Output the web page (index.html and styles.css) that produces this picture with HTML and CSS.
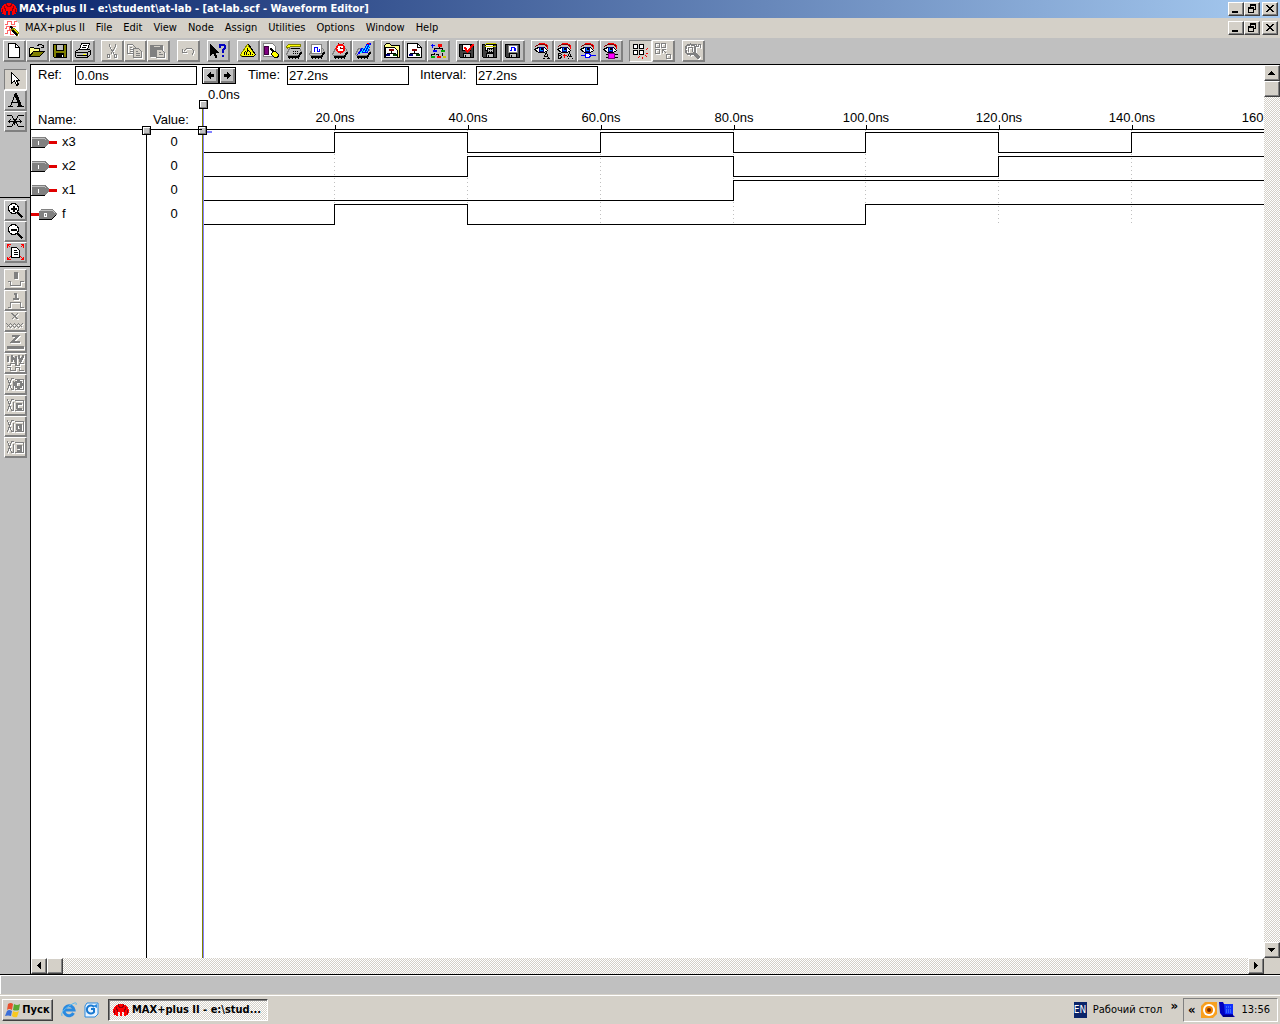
FILE: index.html
```html
<!DOCTYPE html>
<html lang="en">
<head>
<meta charset="utf-8">
<title>MAX+plus II - Waveform Editor</title>
<link rel="stylesheet" href="styles.css">
</head>
<body>
<svg class="sprite" aria-hidden="true">
  <symbol id="logo" viewBox="0 0 16 14">
    <path d="M5 1h6v1h2v1h1v1h1v2h1v4h-1v2h-2v1h-2V9H9v4H7V9H5v4H3v-1H1v-2H0V6h1V4h1V3h1V2h2z" fill="#f00"/>
    <path d="M5 1h1v2h1v1h2V3h1V1h1v3h-1v1H6V4H5zM3 4h1v2h1v3H4V7H3zM12 4h1v3h-1v2h-1V6h1zM1 7h1v4H1zM14 7h1v4h-1z" fill="#900010"/>
  </symbol>
  <symbol id="floppy" viewBox="-.5 -.5 16 16">
    <path d="M0 1H14V14H1L0 13Z" fill="#404040" stroke="#000"/>
    <path d="M3 1H11V7H3Z" fill="#fff" stroke="#000"/>
    <path d="M4 10H11V14H4Z" fill="#c0c0c0" stroke="#000"/><path d="M6 11V14" stroke="#000"/>
  </symbol>
  <symbol id="chip" viewBox="-.5 -.5 16 16">
    <path d="M0 11L3 5H13L15 8L12 12H1Z" fill="#c0c0c0" stroke="#808080"/>
    <path d="M1 13H12L15 9" fill="none" stroke="#000" stroke-width="2"/><path d="M3 13V15M6 13V15M9 13V15M12 13V15" stroke="#000"/>
  </symbol>
  <symbol id="eye" viewBox="-.5 -.5 16 16">
    <path d="M1 3L4 1H10L14 4" fill="none" stroke="#800000"/><path d="M4 0H10L13 2V5" fill="none" stroke="#f00"/>
    <path d="M0 6L4 4H10L13 7L10 9H4Z" fill="#fff" stroke="#000"/>
    <path d="M5 4H9V8H5Z" fill="#08f" stroke="#000080"/><path d="M7 5H8V6H7Z" fill="#000" stroke="#000"/>
  </symbol>
  <symbol id="tree" viewBox="-.5 -.5 16 16">
    <path d="M7 7V10M3 12V10H11V12" fill="none" stroke="#000"/>
    <path d="M5 6H9V7H5Z" fill="#f00" stroke="#800000"/><path d="M2 11H5V12H2Z" fill="#00f" stroke="#000080"/><path d="M9 11H12V12H9Z" fill="#0a0" stroke="#004000"/>
  </symbol>
  <symbol id="mux" viewBox="-.5 -.5 18 16">
    <path d="M0 2H1L5 13H7M0 13H1L5 2H7M8 3H17M8 13H17V3M7 4V12" fill="none" stroke="#808080"/>
  </symbol>
  <symbol id="pin-in" viewBox="0 0 28 11">
    <path d="M1 0h13l5 5-5 5H1z" fill="#808080"/><path d="M1 1h12l2 2" fill="none" stroke="#c0c0c0"/><path d="M0 10h14" stroke="#000"/>
    <path d="M7 4h1v4H7z" fill="#fff"/><path d="M18 4h8v3h-8z" fill="#e00000"/>
  </symbol>
  <symbol id="pin-out" viewBox="0 0 28 11">
    <path d="M0 4h8v3H0z" fill="#e00000"/><path d="M10 0h11l5 5-5 6H8V2z" fill="#808080"/><path d="M9 1h12l3 3" fill="none" stroke="#c0c0c0"/><path d="M8 10h13l4-4" stroke="#000" fill="none"/>
    <path d="M13.500 4.500h2v3h-2z" fill="none" stroke="#fff"/>
  </symbol>
  <symbol id="min" viewBox="0 0 12 10"><path d="M2 7h6v2H2z"/></symbol>
  <symbol id="restore" viewBox="0 0 12 10"><path d="M4 0h6v6H8V5h1V2H5v1H4zM2 3h6v6H2zm1 2v3h4V5z" fill-rule="evenodd"/></symbol>
  <symbol id="close" viewBox="0 0 12 10"><path d="M2 1h2v1h1v1h2V2h1V1h2v1H9v1H8v1H7v1h1v1h1v1h1v1H8V7H7V6H5v1H4v1H2V7h1V6h1V5h1V4H4V3H3V2H2z"/></symbol>
</svg>

<header class="titlebar">
  <svg class="logo"><use href="#logo"/></svg>
  <h1>MAX+plus II - e:\student\at-lab - [at-lab.scf - Waveform Editor]</h1>
  <div class="winbtns">
    <button aria-label="Minimize"><svg><use href="#min"/></svg></button><button aria-label="Restore"><svg><use href="#restore"/></svg></button><button class="close" aria-label="Close"><svg><use href="#close"/></svg></button>
  </div>
</header>

<nav class="menubar">
  <svg class="docicon" viewBox="-.5 -.5 17 16"><path d="M0 0H11L14 3V15H0Z" fill="#fff" stroke="#fff"/><path d="M0 4H3V1H7V4H10V1H12M0 8H2V6H5V9H8V6H11M0 13H3V10H6V14H9" fill="none" stroke="#f66"/><path d="M7 8L14 14" stroke="#808000" stroke-width="4"/><path d="M8 10L13 15M6 6L8 8" stroke="#000" stroke-width="2"/><path d="M10 9L14 13" stroke="#ff0"/></svg>
  <ul>
    <li><a href="#">MAX+plus II</a></li><li><a href="#">File</a></li><li><a href="#">Edit</a></li><li><a href="#">View</a></li><li><a href="#">Node</a></li><li><a href="#">Assign</a></li><li><a href="#">Utilities</a></li><li><a href="#">Options</a></li><li><a href="#">Window</a></li><li><a href="#">Help</a></li>
  </ul>
  <div class="winbtns">
    <button aria-label="Minimize document"><svg><use href="#min"/></svg></button><button aria-label="Restore document"><svg><use href="#restore"/></svg></button><button class="close" aria-label="Close document"><svg><use href="#close"/></svg></button>
  </div>
</nav>

<div class="toolbar" role="toolbar" aria-label="Standard">
  <div class="group">
    <button class="tool" aria-label="New"><svg viewBox="-.5 -.5 16 16"><path d="M2 0H9L13 4V14H2Z" fill="#fff" stroke="#000"/><path d="M9 0V4H13" fill="none" stroke="#000"/></svg></button>
    <button class="tool" aria-label="Open"><svg viewBox="-.5 -.5 16 16"><path d="M0 13V5L1 4H4L5 5H10V8" fill="#ff8" stroke="#000"/><path d="M0 13L4 8H15L10 13Z" fill="#808000" stroke="#000"/><path d="M8 2L10 1H12L14 3M14 1V4H11" fill="none" stroke="#000"/></svg></button>
    <button class="tool" aria-label="Save"><svg viewBox="-.5 -.5 16 16"><path d="M1 1H14V14H2L1 13Z" fill="#808000" stroke="#000"/><path d="M4 1H11V7H4Z" fill="#c0c0c0" stroke="#000"/><path d="M4 10H11V14H4Z" fill="#000" stroke="#000"/><path d="M10 11V13" stroke="#fff"/></svg></button>
    <button class="tool" aria-label="Print"><svg viewBox="-.5 -.5 16 16"><path d="M4 6L6 0H14L12 6" fill="#fff" stroke="#000"/><path d="M7 2H11M6 4H10" stroke="#000"/><path d="M0 8L3 6H14L15 7V11L12 14H1L0 13Z" fill="#c0c0c0" stroke="#000"/><path d="M0 9H12L15 7M12 9V14M1 12H12" fill="none" stroke="#000"/><path d="M7 11H10" stroke="#ff0"/></svg></button>
  </div>
  <div class="group short">
    <button class="tool" disabled aria-label="Cut"><svg viewBox="-.5 -.5 16 16"><path d="M5 0V3L10 11M11 0V3L6 11M3 11H5V14H3ZM10 11H12V14H10Z" fill="none" stroke="#808080"/></svg></button>
    <button class="tool" disabled aria-label="Copy"><svg viewBox="-.5 -.5 16 16"><path d="M0 1H5L8 4V10H0ZM2 4H4M2 6H6M2 8H6" fill="none" stroke="#808080"/><path d="M6 5H11L14 8V14H6Z" fill="#d4d0c8" stroke="#808080"/><path d="M8 8H10M8 10H12M8 12H12" stroke="#808080"/></svg></button>
    <button class="tool" disabled aria-label="Paste"><svg viewBox="-.5 -.5 16 16"><path d="M0 2H12V13H0Z" fill="#808080" stroke="#808080"/><path d="M3 3H9M4 1H8" stroke="#d4d0c8"/><path d="M6 6H11L14 9V14H6Z" fill="#d4d0c8" stroke="#808080"/><path d="M8 9H10M8 11H12" stroke="#808080"/></svg></button>
  </div>
  <div class="group short">
    <button class="tool" disabled aria-label="Undo"><svg viewBox="-.5 -.5 16 16"><path d="M2 5V9H6M3 8L6 5H11L13 7V9L11 12" fill="none" stroke="#808080"/></svg></button>
  </div>
  <div class="group short">
    <button class="tool" aria-label="Context help"><svg viewBox="-.5 -.5 16 16"><path d="M0 1V12L3 9L5 14H6L5 9H8Z" fill="#000" stroke="#000"/><path d="M9 4V2L10 1H13L14 2V5L12 7V9M12 11V13" fill="none" stroke="#0000c0" stroke-width="2"/></svg></button>
  </div>
  <div class="group">
    <button class="tool" aria-label="Hierarchy display"><svg viewBox="-.5 -.5 16 16"><path d="M0 11L7 1L15 11L13 13H1Z" fill="#ff0" stroke="#808000"/><path d="M1 13H13L15 11L8 1" fill="none" stroke="#000"/><path d="M4 11V9L5 8M7 4V7M6 11V9L8 7L10 9V11M8 10V11M12 11V10" fill="none" stroke="#000"/></svg></button>
    <button class="tool" aria-label="Floorplan editor"><svg viewBox="-.5 -.5 16 16"><path d="M0 0H9L12 3V13H0Z" fill="#fff" stroke="#808080"/><path d="M1 3H5V11H1Z" fill="#800080" stroke="#400040"/><path d="M7 5L10 8" stroke="#000" stroke-width="2"/><path d="M9 8H12L15 11V13L13 14H11L8 11Z" fill="#ff0" stroke="#000"/></svg></button>
    <button class="tool" aria-label="Compiler"><svg viewBox="-.5 -.5 16 16"><use href="#chip" x="-.5" y="-.5" width="16" height="16"/><path d="M0 3L2 1H14V3H4L1 5Z" fill="#ff0" stroke="#808000"/><path d="M6 8H12M6 10H11" stroke="#000" stroke-dasharray="1"/><path d="M4 5H13" stroke="#000"/></svg></button>
    <button class="tool" aria-label="Simulator"><svg viewBox="-.5 -.5 16 16"><use href="#chip" x="-.5" y="-.5" width="16" height="16"/><path d="M2 1H12V10H2Z" fill="#fff" stroke="#808080"/><path d="M4 8V8H5V4H8V8H10V5" fill="none" stroke="#00f"/></svg></button>
    <button class="tool" aria-label="Timing analyzer"><svg viewBox="-.5 -.5 16 16"><use href="#chip" x="-.5" y="-.5" width="16" height="16"/><circle cx="8" cy="5" r="4" fill="#fff" stroke="#f00" stroke-width="2"/><path d="M8 3V5H10M5 0H6M10 0H11" fill="none" stroke="#800000"/></svg></button>
    <button class="tool" aria-label="Programmer"><svg viewBox="-.5 -.5 16 16"><use href="#chip" x="-.5" y="-.5" width="16" height="16"/><path d="M3 10L6 5L9 6L12 0H15L12 9H5Z" fill="#00f" stroke="#00f"/><path d="M5 10L8 5M8 9L12 2M11 9L14 2" stroke="#0ff"/><path d="M12 0L15 1" stroke="#f00"/></svg></button>
  </div>
  <div class="group">
    <button class="tool" aria-label="Project name"><svg viewBox="-.5 -.5 16 16"><path d="M0 2L2 0H5L7 2H15V14H0Z" fill="#ff8" stroke="#000"/><path d="M1 4H10L13 7V14H1Z" fill="#fff" stroke="#000"/><use href="#tree" x="-.5" y="-.5" width="16" height="16"/></svg></button>
    <button class="tool" aria-label="Project from current file"><svg viewBox="-.5 -.5 16 16"><path d="M0 0H10L14 4V14H0Z" fill="#fff" stroke="#000"/><path d="M10 0V4H14" fill="none" stroke="#000"/><use href="#tree" x="-.5" y="-.5" width="16" height="16"/></svg></button>
    <button class="tool" aria-label="Top of hierarchy"><svg viewBox="-.5 -.5 16 16"><path d="M0 2H4M2 0V4" stroke="#00f"/><path d="M9 2V5M4 7V5H12V7M4 9V11H1V13M5 11H8V13M12 9V12" fill="none" stroke="#000"/><path d="M7 1.500H11" stroke="#f00" stroke-width="3"/><path d="M2 7.500H6M12 13.500H15" stroke="#00f" stroke-width="2"/><path d="M10 7.500H14M0 13.500H4" stroke="#0a0" stroke-width="2"/><path d="M6 13.500H10" stroke="#f00" stroke-width="2"/><path d="M12 13.500H16" stroke="#cc0" stroke-width="2"/></svg></button>
  </div>
  <div class="group">
    <button class="tool" aria-label="Save and check"><svg viewBox="-.5 -.5 16 16"><use href="#floppy" x="-.5" y="-.5" width="16" height="16"/><path d="M5 4L8 8L14 1" fill="none" stroke="#f00" stroke-width="2"/></svg></button>
    <button class="tool" aria-label="Save and compile"><svg viewBox="-.5 -.5 16 16"><use href="#floppy" x="-.5" y="-.5" width="16" height="16"/><path d="M2 2L4 0H13M2 3H13" stroke="#cc0" fill="none"/><path d="M5 5H11V9H5Z" fill="#c0c0c0" stroke="#000"/><path d="M6 6H11M6 8H11" stroke="#000" stroke-dasharray="1"/></svg></button>
    <button class="tool" aria-label="Save and simulate"><svg viewBox="-.5 -.5 16 16"><use href="#floppy" x="-.5" y="-.5" width="16" height="16"/><path d="M3 2H12V9H3Z" fill="#fff" stroke="#808080"/><path d="M4 7H6V4H9V7H10V4" fill="none" stroke="#00f"/></svg></button>
  </div>
  <div class="group">
    <button class="tool" aria-label="Find text"><svg viewBox="-.5 -.5 16 16"><use href="#eye" x="-.5" y="-.5" width="16" height="16"/><path d="M8 15H10M12 15H15M9 14L12 9L14 15M10 13H13" fill="none" stroke="#000"/></svg></button>
    <button class="tool" aria-label="Search and replace"><svg viewBox="-.5 -.5 16 16"><use href="#eye" x="-.5" y="-.5" width="16" height="16"/><path d="M0 10H3L4 11L3 12H1M3 12L4 13L3 15H0M1 10V15M10 15H11M14 15H15M10 14L12 9L14 14M11 13H14" fill="none" stroke="#000"/><path d="M5 12H9M7 10V14" stroke="#f00"/></svg></button>
    <button class="tool" aria-label="Find node"><svg viewBox="-.5 -.5 16 16"><use href="#eye" x="-.5" y="-.5" width="16" height="16"/><path d="M0 12H15" stroke="#00f"/><path d="M5 10H9L10 12L9 14H5Z" fill="#fff" stroke="#00f"/></svg></button>
    <button class="tool" aria-label="Find in floorplan"><svg viewBox="-.5 -.5 16 16"><use href="#eye" x="-.5" y="-.5" width="16" height="16"/><path d="M2 11H14M2 14H14" stroke="#000"/><path d="M5 10H11V15H5Z" fill="#f0f" stroke="#800080"/></svg></button>
  </div>
  <div class="group short">
    <button class="tool pressed" aria-label="Snap to grid"><svg viewBox="-.5 -.5 16 16"><path d="M1 1H5V5H1ZM7 1H11V5H7ZM1 7H5V11H1ZM7 7H11V11H7Z" fill="#fff" stroke="#000"/><path d="M13 7L15 5M13 10H16M13 12L15 14M10 13V15M7 13L5 15" stroke="#f00" fill="none"/></svg></button>
    <button class="tool" disabled aria-label="Expand selection"><svg viewBox="-.5 -.5 16 16"><path d="M0 0H4V4H0ZM6 0H10V4H6ZM0 6H4V10H0ZM11 11H15V15H11ZM7 6V9M7 6H10M7 6L11 10" fill="none" stroke="#808080"/></svg></button>
  </div>
  <div class="group">
    <button class="tool" disabled aria-label="Find in waveform"><svg viewBox="-.5 -.5 16 16"><circle cx="5" cy="6" r="5" fill="none" stroke="#808080" stroke-width="2"/><path d="M3 8V4H7V8M8 1H11V3H13V1H15V4" fill="none" stroke="#808080"/><path d="M9 10L14 15" stroke="#808080" stroke-width="3"/></svg></button>
  </div>
</div>

<main class="workspace">
  <aside class="toolbox" aria-label="Drawing tools">
    <div class="set first">
      <button class="tool pressed" aria-label="Select"><svg viewBox="-.5 -.5 18 16"><path d="M5 1V12L8 9L10 14L12 13L10 9H13Z" fill="#fff" stroke="#000"/></svg></button>
      <button class="tool" aria-label="Text"><svg viewBox="-.5 -.5 18 16"><path d="M1 14H6M10 14H17M4 14L9 1M6 10H12" stroke="#000" fill="none"/><path d="M9 1L14 14" stroke="#000" stroke-width="3"/></svg></button>
      <button class="tool" aria-label="Waveform edit"><svg viewBox="-.5 -.5 18 16"><path d="M0 2H5L12 13H18M0 13H5L12 2H18M2 8H15M2 8L4 6M2 8L4 10M15 8L13 6M15 8L13 10M8 5V11" stroke="#000" fill="none"/></svg></button>
    </div>
    <div class="set">
      <button class="tool" aria-label="Zoom in"><svg viewBox="-.5 -.5 18 16"><circle cx="7" cy="6" r="5" fill="#fff" stroke="#000"/><path d="M4 6H10M7 3V9" stroke="#000" stroke-width="2"/><path d="M11 10L16 15" stroke="#000" stroke-width="2"/></svg></button>
      <button class="tool" aria-label="Zoom out"><svg viewBox="-.5 -.5 18 16"><circle cx="7" cy="6" r="5" fill="#fff" stroke="#000"/><path d="M4 6H10" stroke="#000" stroke-width="2"/><path d="M11 10L16 15" stroke="#000" stroke-width="2"/></svg></button>
      <button class="tool" aria-label="Fit in window"><svg viewBox="-.5 -.5 18 16"><path d="M5 3H10L13 6V13H5Z" fill="#fff" stroke="#000"/><path d="M7 6H10M7 8H11M7 10H11" stroke="#000"/><path d="M1 3V0H4M1 0L4 3M14 0H17V3M17 0L14 3M1 12V15H4M1 15L4 12M17 12V15H14M17 15L14 12" fill="none" stroke="#f00"/></svg></button>
    </div>
    <div class="set">
      <button class="tool" disabled aria-label="Overwrite low"><svg viewBox="-.5 -.5 18 16"><path d="M8 1H10V6H8Z" fill="none" stroke="#808080" stroke-width="2"/><path d="M1 10H4V14H14V10H17" fill="none" stroke="#808080"/></svg></button>
      <button class="tool" disabled aria-label="Overwrite high"><svg viewBox="-.5 -.5 18 16"><path d="M7 1H9V6M6 6H12" fill="none" stroke="#808080" stroke-width="2"/><path d="M1 15H4V10H14V15H17" fill="none" stroke="#808080"/></svg></button>
      <button class="tool" disabled aria-label="Overwrite undefined"><svg viewBox="-.5 -.5 18 16"><path d="M5 0L11 6M11 0L5 6M6 0L12 6" fill="none" stroke="#808080"/><path d="M0 10L4 14L8 10L12 14L16 10M0 14L4 10L8 14L12 10L16 14" fill="none" stroke="#808080"/></svg></button>
      <button class="tool" disabled aria-label="Overwrite high impedance"><svg viewBox="-.5 -.5 18 16"><path d="M5 1H12L6 7H13" fill="none" stroke="#808080" stroke-width="2"/><path d="M0 13H18" stroke="#808080" stroke-width="3"/></svg></button>
      <button class="tool" disabled aria-label="Invert"><svg viewBox="-.5 -.5 18 16"><path d="M1 0V6M5 6V0L9 6V0M12 0L14 6L17 0" fill="none" stroke="#808080" stroke-width="2"/><path d="M0 10H4V8H9V10H13V8H17M0 12H4V15H9V12H13V15H17" fill="none" stroke="#808080"/></svg></button>
      <button class="tool" disabled aria-label="Overwrite clock"><svg viewBox="-.5 -.5 18 16"><use href="#mux" x="-.5" y="-.5" width="18" height="16"/><circle cx="12" cy="8" r="3" fill="none" stroke="#808080" stroke-width="3"/></svg></button>
      <button class="tool" disabled aria-label="Overwrite count"><svg viewBox="-.5 -.5 18 16"><use href="#mux" x="-.5" y="-.5" width="18" height="16"/><path d="M15 6H11L10 7V9L11 11H15" fill="none" stroke="#808080" stroke-width="2"/></svg></button>
      <button class="tool" disabled aria-label="Overwrite group"><svg viewBox="-.5 -.5 18 16"><use href="#mux" x="-.5" y="-.5" width="18" height="16"/><path d="M15 6H11L10 7V9L11 11H14V8H12" fill="none" stroke="#808080" stroke-width="2"/></svg></button>
      <button class="tool" disabled aria-label="Overwrite state name"><svg viewBox="-.5 -.5 18 16"><use href="#mux" x="-.5" y="-.5" width="18" height="16"/><path d="M15 6H11V8H14V11H10" fill="none" stroke="#808080" stroke-width="2"/></svg></button>
    </div>
  </aside>

  <section class="editor">
    <form class="readout">
      <label class="ref" for="ref">Ref:</label><input id="ref" value="0.0ns">
      <div class="steps"><button type="button" aria-label="Previous"><svg viewBox="0 0 9 9"><path d="M1 4h1V3h1V2h1V1h1v2h3v3H5v2H4V7H3V6H2V5H1z"/></svg></button><button type="button" aria-label="Next"><svg viewBox="0 0 9 9"><path d="M8 4H7V3H6V2H5V1H4v2H1v3h3v2h1V7h1V6h1V5h1z"/></svg></button></div>
      <label class="time" for="time">Time:</label><input id="time" value="27.2ns">
      <label class="interval" for="interval">Interval:</label><input id="interval" value="27.2ns">
    </form>
    <div class="waves">
      <div class="signals">
        <table>
          <thead><tr><th>Name:</th><th class="value">Value:</th></tr></thead>
          <tbody>
            <tr><td><span class="node"><svg><use href="#pin-in"/></svg>x3</span></td><td class="value">0</td></tr>
            <tr><td><span class="node"><svg><use href="#pin-in"/></svg>x2</span></td><td class="value">0</td></tr>
            <tr><td><span class="node"><svg><use href="#pin-in"/></svg>x1</span></td><td class="value">0</td></tr>
            <tr><td><span class="node"><svg><use href="#pin-out"/></svg>f</span></td><td class="value">0</td></tr>
          </tbody>
        </table>
        <span class="handle"></span>
      </div>
      <svg class="plot" role="img" aria-label="Waveforms">
        <defs><g id="grip"><path d="M0 0h9v9H0z" fill="#000"/><path d="M1 1h7v7H1z" fill="#808080"/><path d="M1 1h6v6H1z" fill="#fff"/><path d="M2 2h5v5H2z" fill="#c0c0c0"/></g></defs>
        <g stroke="#c0c0c0" stroke-dasharray="1 3">
          <path d="M132.500 43V138M265.500 43V138M398.500 43V138M531.500 43V138M663.500 43V138M796.500 43V138M929.500 43V138"/>
        </g>
        <path d="M0 42.500H4000M133.500 38V42M266.500 38V42M399.500 38V42M532.500 38V42M664.500 38V42M797.500 38V42M930.500 38V42" stroke="#000"/>
        <g fill="none" stroke="#000">
          <path d="M2 65.500H132.500V45.500H265.500V65.500H398.500V45.500H531.500V65.500H663.500V45.500H796.500V65.500H929.500V45.500H4000"/>
          <path d="M2 89.500H265.500V69.500H531.500V89.500H796.500V69.500H4000"/>
          <path d="M2 113.500H531.500V93.500H4000"/>
          <path d="M2 137.500H132.500V117.500H265.500V137.500H663.500V117.500H4000"/>
        </g>
        <path d="M0 22h1v4000H0z" fill="#808000"/><path d="M1 22h1v4000H1z" fill="#8080ff"/><path d="M5 44h5v2H5z" fill="#8080ff"/>
        <use href="#grip" x="-3" y="13"/><use href="#grip" x="-4" y="39"/>
        <text x="6" y="12">0.0ns</text>
        <g text-anchor="middle">
          <text x="133" y="35">20.0ns</text><text x="266" y="35">40.0ns</text><text x="399" y="35">60.0ns</text><text x="532" y="35">80.0ns</text><text x="664" y="35">100.0ns</text><text x="797" y="35">120.0ns</text><text x="930" y="35">140.0ns</text><text x="1063" y="35">160.0ns</text>
        </g>
      </svg>
    </div>
  </section>

  <div class="scroll vertical">
    <button aria-label="Scroll up"><svg viewBox="0 0 7 4"><path d="M3 0h1v1h1v1h1v1h1v1H0V3h1V2h1V1h1z"/></svg></button><span class="thumb"></span>
    <button class="end" aria-label="Scroll down"><svg viewBox="0 0 7 4"><path d="M0 0h7v1H6v1H5v1H4v1H3V3H2V2H1V1H0z"/></svg></button>
  </div>
  <div class="scroll horizontal">
    <button aria-label="Scroll left"><svg viewBox="0 0 4 7"><path d="M0 3h1V2h1V1h1V0h1v7H3V6H2V5H1V4H0z"/></svg></button><span class="thumb"></span>
    <button class="end" aria-label="Scroll right"><svg viewBox="0 0 4 7"><path d="M4 3H3V2H2V1H1V0H0v7h1V6h1V5h1V4h1z"/></svg></button>
  </div>
</main>

<div class="statusbar"></div>

<footer class="taskbar">
  <button class="start"><svg viewBox="0 0 16 16"><path d="M3 2Q6 0 8 2L7 8Q4 6 2 8Z" fill="#e8502c"/><path d="M9 2Q12 4 15 2L14 8Q11 9 8 8Z" fill="#58a830"/><path d="M2 9Q4 7 7 9L6 14Q3 13 0 14Z" fill="#3a6fd8"/><path d="M8 9Q11 11 14 9L12 15Q9 16 7 14Z" fill="#f8c820"/></svg>Пуск</button>
  <div class="quick">
    <a href="#" aria-label="Internet Explorer"><svg viewBox="0 0 16 16"><path d="M12.500 11A5 5 0 1 1 13 8H4" fill="none" stroke="#2a8ae0" stroke-width="3"/><path d="M1 14Q-1 10 8 4T15 3" fill="none" stroke="#58b8f0"/></svg></a>
    <a href="#" aria-label="Outlook Express"><svg viewBox="0 0 16 16"><path d="M4 1H15V12L12 15H2V4Z" fill="#e8f4ff" stroke="#2a8ae0"/><path d="M11 5A4 4 0 1 0 11 10V7H8" fill="none" stroke="#1878d0" stroke-width="2"/><path d="M10 4L14 2V6Z" fill="#2a8ae0"/></svg></a>
  </div>
  <button class="task"><svg class="logo"><use href="#logo"/></svg>MAX+plus II - e:\stud...</button>
  <span class="lang">EN</span>
  <a class="desk" href="#">Рабочий стол</a>
  <span class="more">»</span>
  <div class="tray">
    <span class="chev">«</span>
    <svg viewBox="0 0 16 16"><path d="M4 0H16V12L12 16H0V4Z" fill="#f8a020"/><circle cx="8" cy="8" r="6" fill="#fff"/><circle cx="8" cy="8" r="4" fill="#f08000"/><circle cx="8" cy="8" r="2" fill="#803000"/></svg>
    <svg viewBox="0 0 16 16"><path d="M0 0H4L5 2H14V13L16 15H4L1 11Z" fill="#0000c0"/><path d="M5 2H14V12H6Z" fill="#1030ff"/><path d="M7 5H12M7 8H12M7 10H12" stroke="#60a0ff" stroke-dasharray="1"/><path d="M4 14H14" stroke="#000040"/></svg>
    <time>13:56</time>
  </div>
</footer>
</body>
</html>
```
FILE: styles.css
```css
:root {
  --face: #d4d0c8;
  --gray: #c0c0c0;
  --shade: #808080;
  --dither: conic-gradient(#fff 25%, var(--face) 0 50%, #fff 0 75%, var(--face) 0) 0 0 / 2px 2px;
  --ui: "DejaVu Sans Condensed", "DejaVu Sans", sans-serif;
}

* { box-sizing: border-box; }

body {
  margin: 0;
  height: 100vh;
  overflow: hidden;
  display: grid;
  grid-template-rows: 18px 20px 26px 1fr 19px 30px;
  background: var(--gray);
  color: #000;
  font: 11px/14px var(--ui);
}

svg { display: block; flex: none; shape-rendering: crispEdges; }
.sprite { position: absolute; width: 0; height: 0; }
a { color: inherit; text-decoration: none; }

button {
  display: flex;
  align-items: center;
  justify-content: center;
  margin: 0;
  padding: 0;
  border: 1px solid;
  border-color: #fff #404040 #404040 #fff;
  box-shadow: inset -1px -1px var(--shade);
  border-radius: 0;
  background: var(--face);
  color: #000;
  font: inherit;
}

.logo { width: 16px; height: 14px; }

/* Title and menu */
.titlebar {
  display: flex;
  align-items: center;
  gap: 2px;
  padding: 0 2px 0 1px;
  background: linear-gradient(to right, #0a246a, #a6caf0);
  color: #fff;
}
.titlebar h1 { margin: 0; font: bold 11px/16px var(--ui); white-space: nowrap; }

.winbtns { display: flex; margin-left: auto; }
.winbtns button { width: 16px; height: 14px; }
.winbtns svg { width: 12px; height: 10px; }
.winbtns .close { margin-left: 2px; }

.menubar { display: flex; align-items: center; padding: 0 2px 0 4px; background: var(--face); }
.docicon { width: 17px; height: 16px; }
.menubar ul { display: flex; gap: 11px; margin: 0; padding: 0 0 0 4px; list-style: none; white-space: nowrap; }

/* Toolbar */
.toolbar { display: flex; align-items: flex-start; padding: 2px 3px; }
.group { display: flex; margin-right: 6px; }
.group.short { margin-right: 7px; }
.tool {
  width: 23px;
  height: 22px;
  padding-right: 1px;
  border-color: #fff var(--shade) var(--shade) #fff;
  background: var(--gray);
}
.tool svg { width: 16px; height: 16px; }
.tool:disabled { background: var(--face); }
.tool:disabled svg { filter: drop-shadow(1px 1px 0 #fff); }
.tool.pressed {
  border-color: var(--shade) #fff #fff var(--shade);
  box-shadow: none;
  background: var(--face);
}

/* Workspace */
.workspace {
  display: grid;
  grid-template-columns: 31px 1fr 16px;
  grid-template-rows: 1fr 16px;
  min-height: 0;
  border-bottom: 1px solid #000;
}

.toolbox { grid-row: 1 / 3; border-right: 1px solid #000; }
.set { padding: 2px 0 3px 4px; border-bottom: 1px solid #000; }
.set:last-child { border-bottom: 0; }
.set.first { min-height: 134px; padding-top: 5px; }
.toolbox .tool { height: 21px; padding-bottom: 1px; }
.toolbox svg { width: 18px; }

.editor {
  display: flex;
  flex-direction: column;
  min-width: 0;
  overflow: hidden;
  border-top: 1px solid #000;
  background: #fff;
  font: 13px/16px "Liberation Sans", Arial, sans-serif;
}

.readout { display: flex; align-items: center; height: 20px; margin-bottom: 2px; padding-left: 7px; }
.readout input {
  width: 122px;
  height: 19px;
  padding: 0 1px;
  border: 1px solid #000;
  background: #fff;
  color: #000;
  font: inherit;
}
.ref { width: 37px; }
.time { width: 39px; }
.interval { width: 56px; margin-left: 11px; }
.steps { display: flex; margin: 0 12px 0 5px; }
.steps button {
  width: 17px;
  height: 17px;
  border-color: #000;
  background: var(--gray);
  box-shadow: inset 1px 1px #fff, inset -2px -2px var(--shade);
}
.steps svg { width: 9px; height: 9px; }

.waves { flex: 1; display: flex; min-height: 0; }
.signals {
  position: relative;
  width: 171px;
  background: linear-gradient(#000, #000) 115px 43px / 1px 100% no-repeat;
}
table { width: 100%; table-layout: fixed; border-collapse: separate; border-spacing: 0; }
th {
  width: 115px;
  height: 43px;
  padding: 0 0 1px 7px;
  border-bottom: 1px solid #000;
  font-weight: normal;
  text-align: left;
  vertical-align: bottom;
}
td { height: 24px; padding: 0; }
th.value { width: 56px; }
td.value { text-align: center; }
.node { display: flex; align-items: center; gap: 3px; }
.node svg { width: 28px; height: 11px; }

.handle {
  position: absolute;
  left: 111px;
  top: 39px;
  width: 9px;
  height: 9px;
  border: 1px solid #000;
  background: var(--gray);
  box-shadow: inset 1px 1px #fff, inset -1px -1px var(--shade);
}

.plot { flex: 1; min-width: 0; overflow: visible; }
.plot text { fill: #000; }

/* Scroll bars */
.scroll { display: flex; background: var(--dither); }
.scroll.vertical { flex-direction: column; border-top: 1px solid #000; }
.scroll button, .thumb { width: 16px; height: 16px; }
.vertical button { padding-right: 1px; }
.vertical svg { width: 7px; height: 4px; }
.horizontal button { padding-bottom: 1px; }
.horizontal svg { width: 4px; height: 7px; }
.vertical .end { margin-top: auto; }
.horizontal .end { margin-left: auto; }
.thumb {
  border: 1px solid;
  border-color: #fff #404040 #404040 #fff;
  box-shadow: inset -1px -1px var(--shade);
  background: var(--face);
}
.workspace::after { content: ""; background: var(--face); }

/* Status bar and task bar */
.statusbar { border: 1px solid #fff; border-width: 1px 0 0 1px; }

.taskbar {
  display: flex;
  align-items: center;
  padding: 1px 2px 0;
  border-top: 1px solid var(--face);
  background: linear-gradient(#fff, #fff) 0 0 / 100% 1px no-repeat var(--face);
}
.start { gap: 1px; width: 51px; height: 22px; font-weight: bold; }
.start svg { width: 16px; height: 16px; shape-rendering: auto; }
.quick { display: flex; gap: 6px; margin: 0 9px 0 8px; }
.quick svg { width: 16px; height: 16px; shape-rendering: auto; }
.task {
  justify-content: flex-start;
  gap: 3px;
  width: 160px;
  height: 22px;
  padding-left: 4px;
  border-color: #404040 #fff #fff #404040;
  box-shadow: inset 1px 1px var(--shade);
  background: var(--dither);
  font-weight: bold;
  white-space: nowrap;
}
.lang {
  width: 13px;
  height: 16px;
  margin-left: auto;
  background: #0a246a;
  color: #fff;
  font-size: 10px;
  line-height: 16px;
}
.desk { margin-left: 6px; white-space: nowrap; }
.more { margin: 0 5px 8px 8px; font-size: 13px; font-weight: bold; }
.tray {
  display: flex;
  align-items: center;
  width: 95px;
  height: 24px;
  padding: 0 7px 0 4px;
  border: 1px solid;
  border-color: var(--shade) #fff #fff var(--shade);
}
.tray svg { width: 16px; height: 16px; margin-right: 2px; shape-rendering: auto; }
.chev { width: 13px; font-size: 13px; font-weight: bold; }
.tray time { margin-left: auto; }
```
